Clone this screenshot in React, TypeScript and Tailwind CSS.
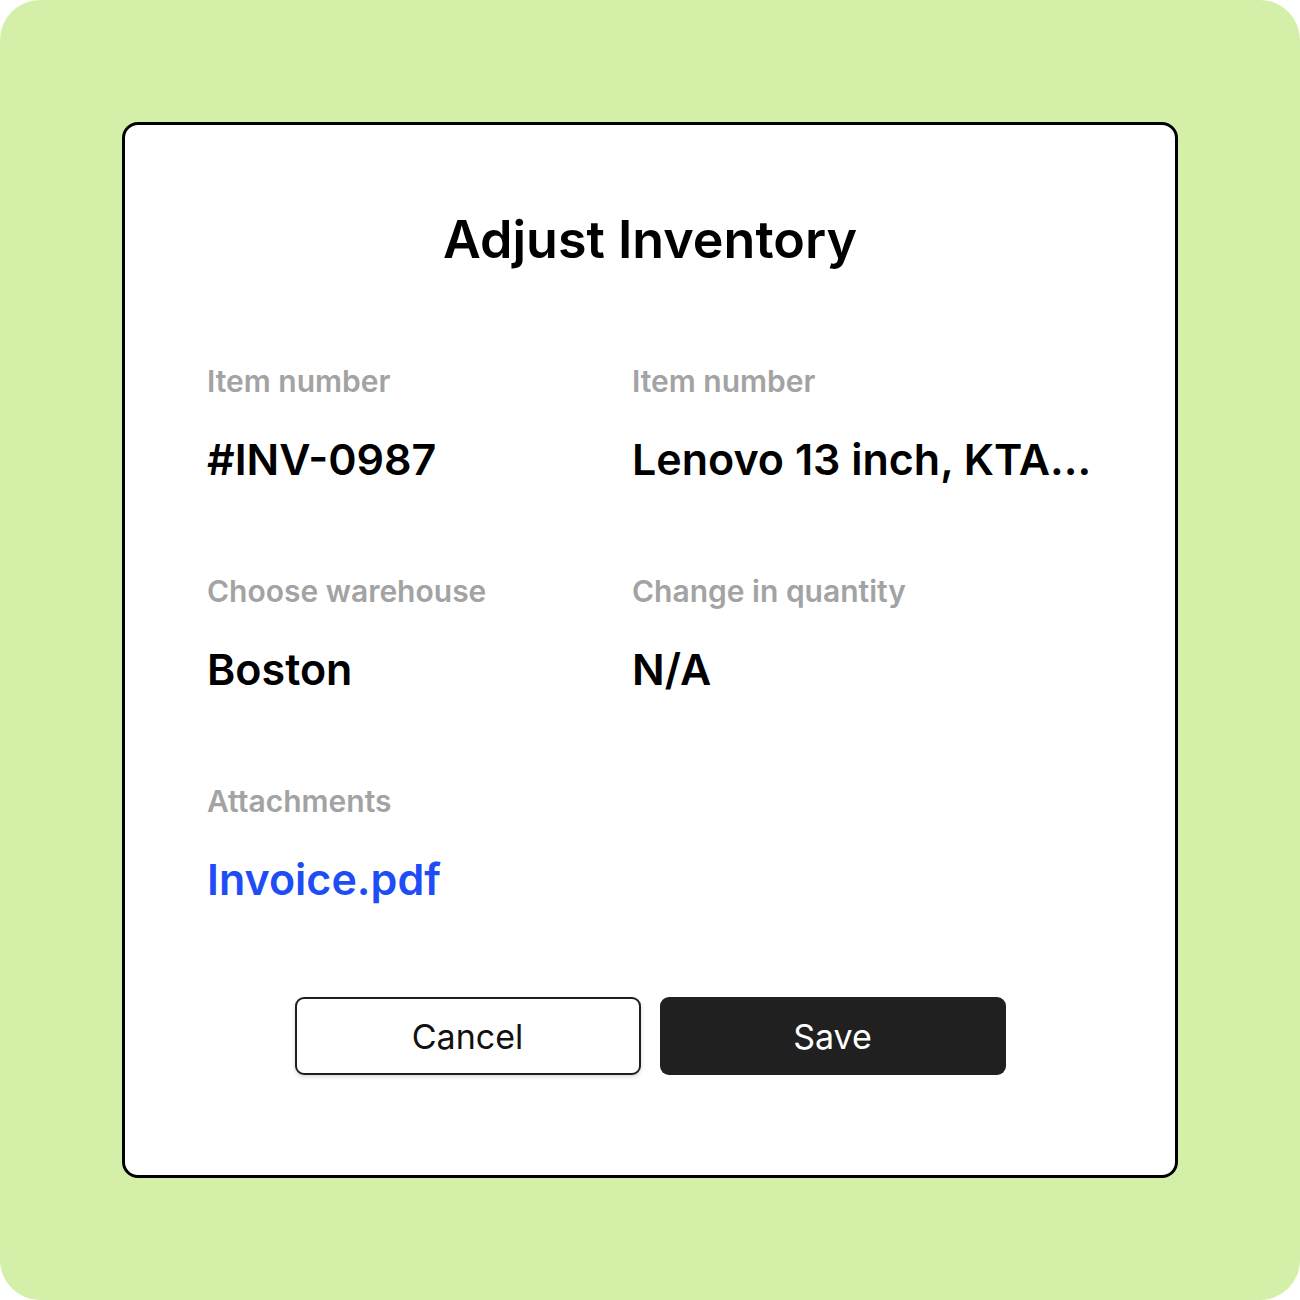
export default function App() {
  const fields: { label: string; value: string; link?: boolean }[][] = [
    [
      { label: "Item number", value: "#INV-0987" },
      { label: "Item number", value: "Lenovo 13 inch, KTA..." },
    ],
    [
      { label: "Choose warehouse", value: "Boston" },
      { label: "Change in quantity", value: "N/A" },
    ],
    [{ label: "Attachments", value: "Invoice.pdf", link: true }],
  ];

  return (
    <div className="w-[1300px] h-[1300px] bg-white font-['Inter',sans-serif]">
      <div className="w-full h-full rounded-[40px] bg-[#d4f0a8] p-[122px]">
        <div className="h-full rounded-[16px] border-[3px] border-black bg-white pt-[84px]">
          <h1 className="text-center text-[52px] leading-[62px] font-semibold text-black">
            Adjust Inventory
          </h1>

          <div className="mt-[93px] pl-[82px] flex flex-col gap-[88px]">
            {fields.map((row, r) => (
              <div key={r} className="grid grid-cols-[425px_1fr]">
                {row.map((f, i) => (
                  <div key={i} className="flex flex-col">
                    <span className="text-[30px] leading-[34px] font-semibold text-[#a3a3a3]">
                      {f.label}
                    </span>
                    <span
                      className={
                        "mt-[35px] text-[43px] leading-[53px] font-semibold " +
                        (f.link ? "text-[#1f4df5]" : "text-black")
                      }
                    >
                      {f.value}
                    </span>
                  </div>
                ))}
              </div>
            ))}
          </div>

          <div className="mt-[91px] flex justify-center gap-[19px]">
            <button className="w-[346px] h-[78px] rounded-[9px] border-2 border-[#1f1f1f] bg-white text-[34px] text-[#111] shadow-[0_2px_4px_rgba(0,0,0,0.15)]">
              Cancel
            </button>
            <button className="w-[346px] h-[78px] rounded-[9px] bg-[#202020] text-[34px] text-white">
              Save
            </button>
          </div>
        </div>
      </div>
    </div>
  );
}
